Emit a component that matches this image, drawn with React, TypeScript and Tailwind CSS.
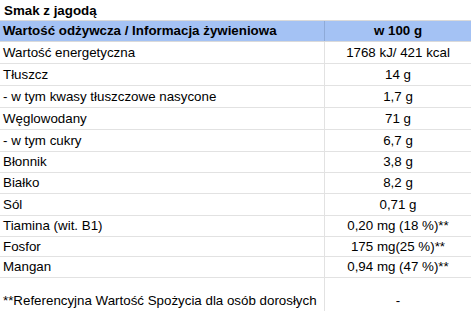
import React from 'react';

const rows: { label: string; value: string; h: string }[] = [
  { label: 'Wartość energetyczna', value: '1768 kJ/ 421 kcal', h: 'h-[22px]' },
  { label: 'Tłuszcz', value: '14 g', h: 'h-[22px]' },
  { label: '- w tym kwasy tłuszczowe nasycone', value: '1,7 g', h: 'h-[22px]' },
  { label: 'Węglowodany', value: '71 g', h: 'h-[22px]' },
  { label: '- w tym cukry', value: '6,7 g', h: 'h-[22px]' },
  { label: 'Błonnik', value: '3,8 g', h: 'h-[21px]' },
  { label: 'Białko', value: '8,2 g', h: 'h-[21px]' },
  { label: 'Sól', value: '0,71 g', h: 'h-[22px]' },
  { label: 'Tiamina (wit. B1)', value: '0,20 mg (18 %)**', h: 'h-[21px]' },
  { label: 'Fosfor', value: '175 mg(25 %)**', h: 'h-[20px]' },
  { label: 'Mangan', value: '0,94 mg (47 %)**', h: 'h-[21px]' },
];

export default function App() {
  return (
    <div className="w-[471px] h-[311px] overflow-hidden bg-white text-black text-[13.33px] leading-none font-['Liberation_Sans',Arial,sans-serif]">
      <div className="h-[20px] flex items-center pl-[4px] pt-[2px] font-bold">Smak z jagodą</div>
      <div className="flex h-[22px] border-t border-b border-[#dadada] bg-[#a4c2f4] font-bold">
        <div className="w-[325px] flex items-center pl-[3px] border-r border-[#8eaad8]">
          Wartość odżywcza / Informacja żywieniowa
        </div>
        <div className="flex-1 flex items-center justify-center">w 100 g</div>
      </div>
      {rows.map((r) => (
        <div key={r.label} className={`flex ${r.h} border-b border-[#e2e2e2]`}>
          <div className="w-[325px] flex items-center pl-[3px] border-r border-[#e2e2e2]">{r.label}</div>
          <div className="flex-1 flex items-center justify-center">{r.value}</div>
        </div>
      ))}
      <div className="flex h-[33px]">
        <div className="w-[325px] flex items-end pb-[4px] pl-[3px] border-r border-[#e2e2e2]">
          **Referencyjna Wartość Spożycia dla osób dorosłych
        </div>
        <div className="flex-1 flex items-end justify-center pb-[4px]">-</div>
      </div>
    </div>
  );
}
